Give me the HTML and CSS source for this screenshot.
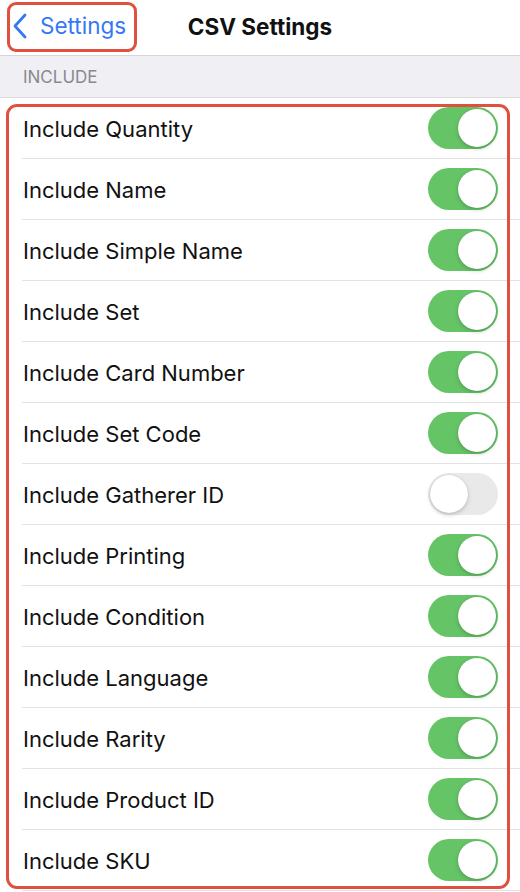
FILE: index.html
```html
<!DOCTYPE html>
<html>
<head>
<meta charset="utf-8">
<link rel="stylesheet" href="styles.css">
</head>
<body>
<div class="screen">
  <header class="nav">
    <a class="back">
      <svg class="chev" width="16" height="26" viewBox="0 0 16 26"><path d="M13 2 L3 13 L13 24" fill="none" stroke="#3478f6" stroke-width="2.8" stroke-linecap="round" stroke-linejoin="round"/></svg>
      <span>Settings</span>
    </a>
    <div class="title">CSV Settings</div>
    <div class="mark mark-back"></div>
  </header>
  <div class="section-header">INCLUDE</div>
  <div class="list">
    <div class="row"><span class="label">Include Quantity</span><span class="toggle on"><span class="knob"></span></span></div>
    <div class="row"><span class="label">Include Name</span><span class="toggle on"><span class="knob"></span></span></div>
    <div class="row"><span class="label">Include Simple Name</span><span class="toggle on"><span class="knob"></span></span></div>
    <div class="row"><span class="label">Include Set</span><span class="toggle on"><span class="knob"></span></span></div>
    <div class="row"><span class="label">Include Card Number</span><span class="toggle on"><span class="knob"></span></span></div>
    <div class="row"><span class="label">Include Set Code</span><span class="toggle on"><span class="knob"></span></span></div>
    <div class="row"><span class="label">Include Gatherer ID</span><span class="toggle off"><span class="knob"></span></span></div>
    <div class="row"><span class="label">Include Printing</span><span class="toggle on"><span class="knob"></span></span></div>
    <div class="row"><span class="label">Include Condition</span><span class="toggle on"><span class="knob"></span></span></div>
    <div class="row"><span class="label">Include Language</span><span class="toggle on"><span class="knob"></span></span></div>
    <div class="row"><span class="label">Include Rarity</span><span class="toggle on"><span class="knob"></span></span></div>
    <div class="row"><span class="label">Include Product ID</span><span class="toggle on"><span class="knob"></span></span></div>
    <div class="row"><span class="label">Include SKU</span><span class="toggle on"><span class="knob"></span></span></div>
    <div class="mark mark-list"></div>
  </div>
</div>
</body>
</html>
```
FILE: styles.css
```css
html, body {
  margin: 0;
  padding: 0;
  background: #ffffff;
}
.screen {
  width: 520px;
  height: 892px;
  overflow: hidden;
  position: relative;
  font-family: "Inter", "Liberation Sans", sans-serif;
  color: #111111;
}
.nav {
  height: 55px;
  border-bottom: 1px solid #d6d6da;
  display: flex;
  align-items: center;
  justify-content: center;
  position: relative;
  background: #ffffff;
}
.back {
  position: absolute;
  left: 12px;
  top: 12px;
  display: flex;
  align-items: center;
  gap: 12px;
  color: #3478f6;
  font-size: 22.5px;
}
.chev { display: block; }
.title {
  font-weight: 700;
  font-size: 22.5px;
  margin-top: -3px;
}
.section-header {
  height: 42px;
  background: #efeff4;
  border-bottom: 1px solid #dcdce0;
  box-sizing: border-box;
  display: flex;
  align-items: center;
  padding-left: 23px;
  padding-top: 1px;
  font-size: 17px;
  color: #8a8a8e;
}
.list {
  position: relative;
}
.row {
  height: 61px;
  margin-left: 22px;
  padding-right: 22px;
  border-bottom: 1px solid #e2e2e4;
  box-sizing: border-box;
  display: flex;
  align-items: center;
  justify-content: space-between;
}
.label {
  font-size: 22px;
  padding-left: 1px;
  padding-top: 2px;
}
.toggle {
  width: 70px;
  height: 42px;
  border-radius: 21px;
  position: relative;
  box-sizing: border-box;
}
.toggle.on { background: #65c466; }
.toggle.off { background: #e9e9ea; }
.knob {
  position: absolute;
  top: 2px;
  width: 38px;
  height: 38px;
  border-radius: 50%;
  background: #ffffff;
  box-shadow: 0 2px 4px rgba(0,0,0,0.18), 0 0 1px rgba(0,0,0,0.2);
}
.toggle.on .knob { right: 2px; }
.toggle.off .knob { left: 2px; }
.mark {
  position: absolute;
  border: 3px solid #e0503f;
  box-sizing: border-box;
}
.mark-back {
  left: 7px;
  top: 2px;
  width: 130px;
  height: 50px;
  border-radius: 9px;
}
.mark-list {
  left: 6px;
  top: 6px;
  width: 504px;
  height: 785px;
  border-radius: 11px;
}
```
